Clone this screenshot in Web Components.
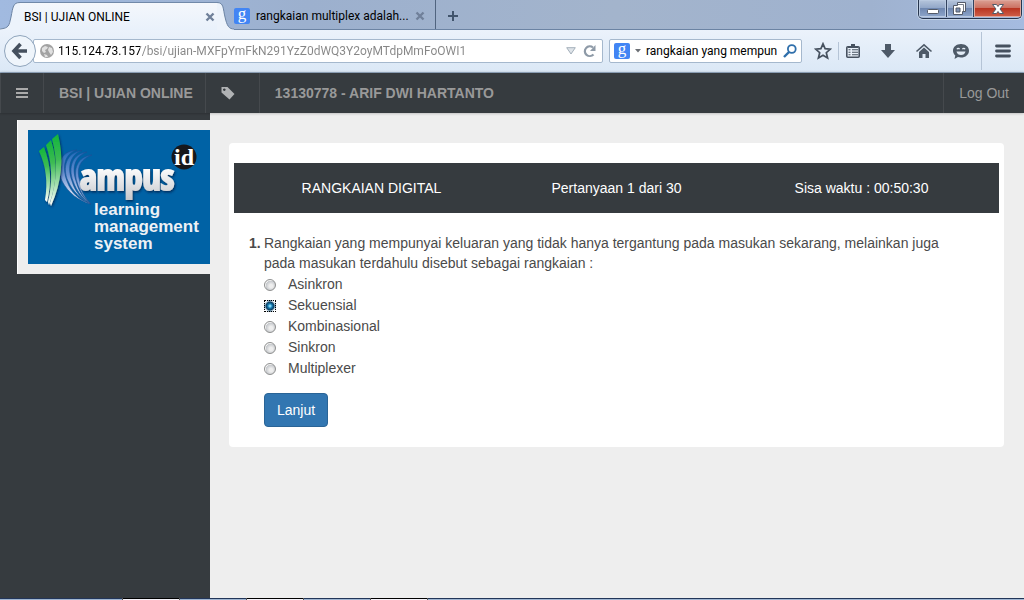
<!DOCTYPE html>
<html lang="id">
<head>
<meta charset="utf-8">
<title>BSI | UJIAN ONLINE</title>
<style>
  html, body { margin: 0; }
  body { font-family: "Liberation Sans", Arial, sans-serif; font-size: 14px; line-height: 20px; color: #4a4a4a; background: #eee;
    --chrome-font: 12px/16px Roboto, "Open Sans", sans-serif; --dark: #363b3f; }
</style>
</head>
<body>
<exam-page></exam-page>

<script>
const define = (name, html) => {
  const tpl = document.createElement('template');
  tpl.innerHTML = html;
  customElements.define(name, class extends HTMLElement {
    constructor() {
      super();
      this.attachShadow({ mode: 'open' }).append(tpl.content.cloneNode(true));
    }
  });
};

/* Blue search-engine badge */
define('engine-badge', `
<style>
  :host { display: flex; flex: none; width: 16px; height: 16px; border-radius: 2px; background: #4285f4; color: #fff;
    justify-content: center; align-items: center; font: 17px/16px "Liberation Serif", serif; }
  span { height: 20px; }
</style>
<span>g</span>`);

define('tab-close', `
<style>
  :host { display: block; flex: none; }
  button { display: block; border: 0; padding: 0; background: none; width: 10px; height: 10px; }
  svg { display: block; }
</style>
<button type="button" aria-label="Tutup tab"><svg width="10" height="10" viewBox="0 0 10 10"><path d="M1.500 1.500l7 7M8.500 1.500l-7 7" stroke="#70809a" stroke-width="2.400"/></svg></button>`);

define('window-controls', `
<style>
  :host { display: flex; height: 18px; border: 1px solid #26354e; border-top: 0; border-radius: 0 0 5px 5px; overflow: hidden; box-shadow: 0 0 0 1px #c2d2e6; }
  button { display: flex; align-items: center; justify-content: center; margin: 0; padding: 0; border: 0; width: 27px; height: 17px;
    background: linear-gradient(#b6c5dc, #93a8c9 45%, #6f87b0 50%, #8ea6cb); box-shadow: inset 0 0 0 1px #b9c9e0; }
  button + button { border-left: 1px solid #33435f; }
  .close { width: 48px; background: linear-gradient(#dba093, #cc7263 45%, #b93521 50%, #d0604a); box-shadow: inset 0 0 0 1px #dfa79c; }
</style>
<button type="button" aria-label="Minimalkan"><svg width="14" height="14" viewBox="0 0 14 14"><rect x="1.500" y="7.500" width="11" height="4" rx="1" fill="#fff" stroke="#535a68"/></svg></button>
<button type="button" aria-label="Pulihkan"><svg width="14" height="14" viewBox="0 0 14 14"><path d="M4.500 .5h8v9h-3v3h-9v-9h4z" fill="#fff" stroke="#535a68"/><path d="M3 6h4v4h-4z" fill="#8093b4" stroke="#535a68"/><path d="M4.500 2.500h6v7" fill="none" stroke="#535a68" stroke-width=".8"/></svg></button>
<button type="button" class="close" aria-label="Tutup"><svg width="14" height="14" viewBox="0 0 14 14"><path d="M1.500 2.500h4l1.500 2 1.500-2h4l-3.500 4.500 3.500 4.500h-4l-1.500-2-1.500 2h-4l3.500-4.500z" fill="#fff" stroke="#535a68"/></svg></button>`);

define('tab-strip', `
<style>
  :host { display: flex; align-items: flex-start; height: 30px; font: var(--chrome-font); color: #000;
    background: linear-gradient(#6b83a3, #6b83a3) bottom / 100% 1px no-repeat, linear-gradient(90deg, #a1bae0, #9cb0ce 30%, #a3b4cc 60%, #9fb2cf 85%, #a5bbe0); padding-right: 2px; }
  .active { display: flex; flex: 0 1 234px; height: 30px; }
  .cap { display: block; flex: none; }
  .body { display: flex; align-items: center; flex: 1; min-width: 0; box-sizing: border-box; height: 28px; margin-top: 2px; padding: 0 2px 0 4px;
    border-top: 1px solid #7189a9; background: linear-gradient(#f4f7fc, #e9f1fb); }
  .label { flex: 1; white-space: nowrap; overflow: hidden; }
  .other { display: flex; align-items: center; box-sizing: border-box; flex: 0 1 202px; min-width: 0; height: 29px; padding: 3px 10px 0 0; gap: 6px; border-right: 1px solid #50647f; }
  .new { display: flex; margin: 0; padding: 10px 11px; border: 0; background: none; }
  window-controls { margin-left: auto; }
</style>
<div class="active">
  <svg class="cap" width="20" height="30" viewBox="0 0 20 30"><path d="M0 30V28.500C9 28 9 26 11 17C13 7 13 2.500 20 2.500V30z" fill="#edf3fb"/><path d="M0 29C9 28 9 26 11 17C13 7 13 2.500 20 2.500" fill="none" stroke="#6b83a3"/></svg>
  <div class="body"><span class="label">BSI | UJIAN ONLINE</span><tab-close></tab-close></div>
  <svg class="cap" width="17" height="30" viewBox="0 0 17 30"><path d="M0 30V2.500C7 2.500 6 9 8 17C10 26 12 29 17 29V30z" fill="#edf3fb"/><path d="M0 2.500C7 2.500 6 9 8 17C10 26 12 29 17 29" fill="none" stroke="#6b83a3"/></svg>
</div>
<div class="other"><engine-badge></engine-badge><span class="label">rangkaian multiplex adalah...</span><tab-close></tab-close></div>
<button type="button" class="new" aria-label="Tab baru"><svg width="12" height="12" viewBox="0 0 12 12"><path d="M6 1v10M1 6h10" stroke="#41546c" stroke-width="2"/></svg></button>
<window-controls></window-controls>`);

define('browser-toolbar', `
<style>
  :host { display: flex; align-items: center; box-sizing: border-box; height: 43px; padding: 0 12px 0 4px; border-bottom: 1px solid #9db3cc;
    background: linear-gradient(#ebf2fb, #dbe8f6); }
  input { min-width: 0; flex: 1; border: 0; padding: 0; margin: 0; outline: 0; background: none; height: 22px; font: var(--chrome-font); color: #000; }
  .url { background: linear-gradient(90deg, #000 82px, #868686 82px); background-clip: text; -webkit-background-clip: text; -webkit-text-fill-color: transparent; }
  .field { display: flex; align-items: center; box-sizing: border-box; min-width: 0; height: 24px; border: 1px solid #a5b8cd; border-radius: 2px; background: #fff; }
  .address { flex: 1; margin-left: -3px; padding: 0 5px 0 6px; gap: 4px; }
  .address button { margin-left: 3px; }
  .search { flex: 0 1 193px; margin-left: 6px; padding: 0 4px; gap: 5px; }
  button { display: flex; margin: 0; padding: 0; border: 0; background: none; }
  .back { z-index: 1; position: relative; }
  .tools { display: flex; flex: none; align-items: center; gap: 19px; margin-left: 12px; }
  .bar { width: 1px; height: 18px; background: #b5c4d6; margin: 0 -13px; }
  .bar.tall { height: 38px; margin: 0 -7px 0 -8px; }
  svg { display: block; flex: none; }
</style>
<button type="button" class="back" aria-label="Kembali"><svg width="32" height="32" viewBox="0 0 32 32"><circle cx="16" cy="16" r="15.500" fill="#eff5fb" stroke="#8fa4bb"/><path d="M16.500 9L10 16l6.500 7M10.500 16H23" fill="none" stroke="#45505e" stroke-width="3.600"/></svg></button>
<div class="field address">
  <svg width="14" height="14" viewBox="0 0 14 14"><circle cx="7" cy="7" r="7" fill="#a2a2a2"/><path d="M2 4l3-2 3 1-1 2-2 1 1 2-2 1-2-2zM9 3l3 1 1 4-2 3-2-3-1-2zM4 10l3 1 1 2H5z" fill="#e0e0e0"/></svg>
  <input class="url" type="text" aria-label="Alamat" value="115.124.73.157/bsi/ujian-MXFpYmFkN291YzZ0dWQ3Y2oyMTdpMmFoOWI1">
  <button type="button" aria-label="Riwayat"><svg width="10" height="8" viewBox="0 0 10 8"><path d="M.7 .7h8.600L5 7z" fill="#dfe4e9" stroke="#a3afba"/></svg></button>
  <button type="button" aria-label="Muat ulang"><svg width="14" height="14" viewBox="0 0 14 14"><path d="M10.500 10.500A5 4.800 0 1 1 10 3.500" fill="none" stroke="#8e9aa7" stroke-width="2.200"/><path d="M12.500 1v6H7z" fill="#8e9aa7"/></svg></button>
</div>
<div class="field search">
  <engine-badge></engine-badge>
  <svg width="6" height="4" viewBox="0 0 6 4"><path d="M0 0h6L3 3.500z" fill="#6b6f75"/></svg>
  <input type="text" aria-label="Cari" value="rangkaian yang mempun">
  <button type="button" aria-label="Cari"><svg width="14" height="14" viewBox="0 0 14 14"><circle cx="8.800" cy="5" r="3.900" fill="none" stroke="#2f6fab" stroke-width="1.800"/><path d="M6 8L1 13" stroke="#2f6fab" stroke-width="2.400"/></svg></button>
</div>
<div class="tools">
  <button type="button" aria-label="Markah"><svg width="18" height="18" viewBox="0 0 18 18"><path d="M9 1.800l2.100 4.900 5.200.5-4 3.500 1.300 5.300L9 13.200 4.400 16l1.300-5.300-4-3.500 5.200-.5z" fill="none" stroke="#46515f" stroke-width="1.700"/></svg></button>
  <span class="bar"></span>
  <button type="button" aria-label="Daftar markah"><svg width="16" height="16" viewBox="0 0 16 16"><rect x="1.800" y="3.800" width="12.400" height="10.400" rx="1" fill="#e8f0f9" stroke="#46515f" stroke-width="1.600"/><path d="M3 5V3h3V1h4v2h3v2z" fill="#46515f"/><path d="M3.500 6.700h2M7 6.700h6M3.500 9.200h2M7 9.200h6M3.500 11.700h2M7 11.700h6" stroke="#46515f" stroke-width="1.100"/></svg></button>
  <button type="button" aria-label="Unduhan"><svg width="16" height="16" viewBox="0 0 16 16"><path d="M5 1h6v6h4L8 15 1 7h4z" fill="#4e5a68"/></svg></button>
  <button type="button" aria-label="Beranda"><svg width="18" height="16" viewBox="0 0 18 16"><path d="M1.500 8.500L9 1.800l7.500 6.700" fill="none" stroke="#4e5a68" stroke-width="1.600"/><path d="M4 9l5-4.500L14 9v6h-3.500v-4h-3v4H4z" fill="#4e5a68"/></svg></button>
  <button type="button" aria-label="Obrolan"><svg width="18" height="17" viewBox="0 0 18 17"><path d="M9 1c4.500 0 8 2.800 8 6.700s-3.500 6.800-8 6.800c-1.200 0-2.200-.2-3.100-.5L2.500 16l.8-3.500C1.800 11.300 1 9.500 1 7.700 1 3.800 4.500 1 9 1z" fill="#4e5a68"/><path d="M5 6.200c.5-1.200 2-1.200 2.500 0M10.500 6.200c.5-1.200 2-1.200 2.500 0" fill="none" stroke="#e3ecf6" stroke-width="1.300"/><path d="M4.500 8.500h9c-.5 2.400-2.300 3.600-4.500 3.600s-4-1.200-4.500-3.600z" fill="#e3ecf6"/></svg></button>
  <span class="bar tall"></span>
  <button type="button" aria-label="Menu"><svg width="18" height="16" viewBox="0 0 18 16"><path d="M2.500 3h13M2.500 8h13M2.500 13h13" stroke="#46515f" stroke-width="2.800" stroke-linecap="round"/></svg></button>
</div>`);

define('exam-nav', `
<style>
  :host { display: flex; box-sizing: border-box; height: 40px; background: var(--dark); border-left: 1px solid #45494d; color: #999; line-height: 40px; box-shadow: 0 0 3px #0005; z-index: 1; position: relative; }
  a { display: flex; align-items: center; color: inherit; text-decoration: none; padding: 0 15px; border-right: 1px solid #45494d; white-space: nowrap; }
  .brand { font-weight: bold; padding-right: 12px; }
  .user { padding: 0 15px; white-space: nowrap; }
  .tag { padding: 0 24px 0 15px; }
  .out { margin-left: auto; border-right: 0; border-left: 1px solid #45494d; }
  svg { display: block; }
</style>
<a href="#menu" aria-label="Menu"><svg width="12" height="12" viewBox="0 0 12 12"><path d="M0 2h12M0 6h12M0 10h12" stroke="#aaa" stroke-width="2"/></svg></a>
<a href="#home" class="brand">BSI | UJIAN ONLINE</a>
<a href="#tag" class="tag" aria-label="Label"><svg width="14" height="14" viewBox="0 0 14 14"><path fill-rule="evenodd" d="M.5 1H6.500L13.500 8 8.500 13.500.5 6.500zM3.300 2.400a1.300 1.300 0 1 0 .01 0z" fill="#b0b2b4"/></svg></a>
<b class="user">13130778 - ARIF DWI HARTANTO</b>
<a href="#logout" class="out">Log Out</a>`);

define('campus-logo', `
<style>
  :host { display: block; overflow: hidden; }
  .frame { box-sizing: border-box; width: 212px; padding: 10px; background: #eee; border-left: 1px solid #fff; }
  svg { display: block; background: #0062a5; overflow: visible; }
</style>
<div class="frame">
<svg width="190" height="134" viewBox="0 0 190 134" role="img" aria-label="Kampus.id learning management system">
  <defs>
    <linearGradient id="g" x1="0" y1="0" x2="0" y2="1"><stop offset="0" stop-color="#12b53c"/><stop offset=".35" stop-color="#3dbb53"/><stop offset="1" stop-color="#fff"/></linearGradient>
    <linearGradient id="b" x1="0" y1="0" x2="0" y2="1"><stop offset="0" stop-color="#1a6ab8"/><stop offset=".45" stop-color="#6d93d3"/><stop offset="1" stop-color="#fff"/></linearGradient>
    <linearGradient id="w" x1="0" y1="0" x2="0" y2="1"><stop offset=".3" stop-color="#fff"/><stop offset="1" stop-color="#c4c6ca"/></linearGradient>
    <filter id="s" x="-20%" y="-20%" width="140%" height="150%"><feDropShadow dx="1" dy="1.500" stdDeviation="1" flood-color="#00234a" flood-opacity=".8"/></filter>
  </defs>
  <g fill="url(#b)" stroke="#1b4f94" stroke-width=".6">
    <path d="M49 20C31 21 28 37 34 51C40 63 51 71 63 74C51 70 43 63 39 51C34 37 36 24 49 20z"/>
    <path d="M54 20.500C38 22 34 38 40 51C45 62 54 70 63 74C53 69 47 62 44 51C39 37 42 25 54 20.500z"/>
    <path d="M59 22C44 23 40 38 45 51C49 62 56 70 63 74C55 68 51 62 48 51C44 38 46 27 59 22z"/>
    <path d="M64 25C49 26 45 40 49 52C52 62 57 69 63 74C57 68 53 62 52 52C48 39 51 30 64 25z"/>
  </g>
  <g filter="url(#s)">
    <path fill="url(#g)" d="M11 21L16 17C23 36 24 52 19 72L17 70C20 52 18 36 11 21z"/>
    <path fill="url(#g)" d="M18 15L23 10C30 32 29 54 21 75L20 72C25 52 24 32 18 15z"/>
    <path fill="url(#g)" d="M24 9L30 4C36 28 34 52 23 76L22 73C29 52 30 30 24 9z"/>
  </g>
  <text x="52" y="60" font-family="'Open Sans Condensed', 'Liberation Sans Narrow', 'Liberation Sans', sans-serif" font-weight="700" font-size="36" fill="url(#w)" stroke="url(#w)" stroke-width="2" filter="url(#s)">ampus</text>
  <circle cx="156" cy="27" r="12.500" fill="#17181c"/>
  <text x="156" y="35" text-anchor="middle" font-family="'Liberation Serif', serif" font-weight="700" font-size="24" fill="#fff">id</text>
  <g font-family="'Liberation Sans', Arial, sans-serif" font-size="17" font-weight="700" fill="#eef1f5">
    <text x="66" y="85">learning</text>
    <text x="66" y="102">management</text>
    <text x="66" y="119">system</text>
  </g>
</svg>
</div>`);

define('exam-sidebar', `
<style>
  :host { display: block; box-sizing: border-box; flex: 0 0 210px; min-width: 0; overflow: hidden; padding: 7px 0 0 17px; background: var(--dark); }
</style>
<slot></slot>`);

define('question-card', `
<style>
  :host { display: block; background: #fff; border-radius: 4px; padding: 20px 5px; }
  header { display: grid; grid-template-columns: repeat(3, 1fr); padding: 15px; background: var(--dark); color: #fff; text-align: center; }
  form { display: grid; grid-template-columns: 15px 1fr; padding: 20px 25px 0 15px; }
  p { margin: 0; padding-right: 15px; }
  .answers { grid-column: 2; display: grid; gap: 1px; margin-top: 1px; justify-items: start; }
  label { display: flex; align-items: center; gap: 12px; height: 20px; }
  input { appearance: none; box-sizing: border-box; width: 12px; height: 12px; margin: 2px 0 0; border: 1px solid #8e8f8f; border-radius: 50%;
    background: radial-gradient(circle at 60% 60%, #eee 20%, #c4c7cb 60%, #f4f4f4 65%); outline: 0; }
  input:checked { border: 1px dotted #000; border-radius: 0; background: radial-gradient(circle, #7fd4f2 1px, #1881b8 2px, #0b3c5f 4px, #b5c9d6 5px, #fff 6px); }
  button { grid-column: 2; justify-self: start; margin: 15px 0 0; padding: 6px 12px; border: 1px solid #2a6496; border-radius: 4px; background: #3276b1; color: #fff; font: inherit; }
</style>
<header><span>RANGKAIAN DIGITAL</span><span>Pertanyaan 1 dari 30</span><span>Sisa waktu : 00:50:30</span></header>
<form>
  <b>1.</b>
  <p>Rangkaian yang mempunyai keluaran yang tidak hanya tergantung pada masukan sekarang, melainkan juga pada masukan terdahulu disebut sebagai rangkaian :</p>
  <div class="answers" role="radiogroup" aria-label="Pilihan jawaban">
    <label><input type="radio" name="answer">Asinkron</label>
    <label><input type="radio" name="answer" checked>Sekuensial</label>
    <label><input type="radio" name="answer">Kombinasional</label>
    <label><input type="radio" name="answer">Sinkron</label>
    <label><input type="radio" name="answer">Multiplexer</label>
  </div>
  <button type="button">Lanjut</button>
</form>`);

define('task-bar', `
<style>
  :host { display: grid; grid-template-columns: 122px 58px 66px 58px 66px 58px 1fr; height: 2px; background: linear-gradient(#223558 50%, #a0b6d2 50%); }
  i:nth-of-type(even) { background: linear-gradient(#000 50%, #f5f3fa 50%); border: solid #555; border-width: 0 1px; }
</style>
<i></i><i></i><i></i><i></i><i></i><i></i>`);

define('exam-page', `
<style>
  :host { display: flex; flex-direction: column; min-height: 100vh; }
  .work { display: flex; flex: 1; }
  main { flex: 1; min-width: 0; padding: 30px 20px 30px 19px; background: #eee; }
</style>
<tab-strip></tab-strip>
<browser-toolbar></browser-toolbar>
<exam-nav></exam-nav>
<div class="work">
  <exam-sidebar><campus-logo></campus-logo></exam-sidebar>
  <main><question-card></question-card></main>
</div>
<task-bar></task-bar>`);
</script>
</body>
</html>
